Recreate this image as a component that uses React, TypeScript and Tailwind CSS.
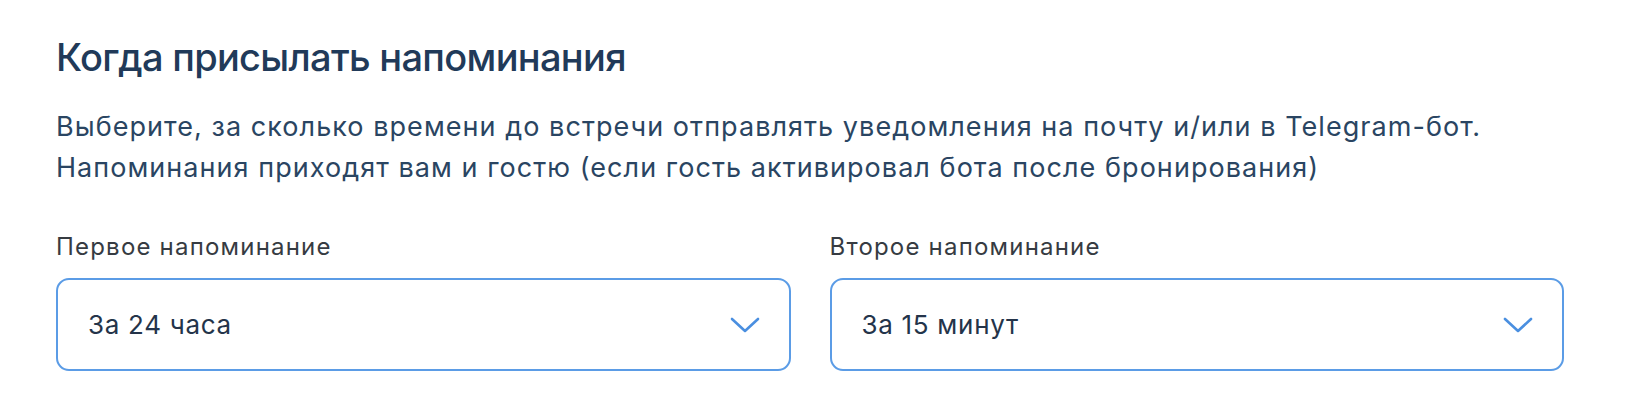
import React, { useState } from 'react';

type Option = { value: string; label: string };

const OPTIONS: Option[] = [
  { value: '15m', label: 'За 15 минут' },
  { value: '1h', label: 'За 1 час' },
  { value: '3h', label: 'За 3 часа' },
  { value: '24h', label: 'За 24 часа' },
];

const ReminderSelect: React.FC<{ label: string; value: string; onChange: (v: string) => void }> = ({
  label,
  value,
  onChange,
}) => {
  const current = OPTIONS.find(o => o.value === value);
  return (
    <div className="flex flex-col">
      <div className="text-[24px] leading-[30px] text-[#363b42] tracking-[1.2px]">{label}</div>
      <div className="relative mt-[16px]">
        <select
          value={value}
          onChange={e => onChange(e.target.value)}
          className="absolute inset-0 opacity-0 cursor-pointer"
        >
          {OPTIONS.map(o => (
            <option key={o.value} value={o.value}>
              {o.label}
            </option>
          ))}
        </select>
        <div className="flex h-[93px] items-center justify-between rounded-[13px] border-2 border-[#5b9ce6] pl-[30px] pr-[29px]">
          <span className="text-[26px] text-[#24344a] tracking-[0.7px]">{current?.label}</span>
          <svg width="30" height="16" viewBox="0 0 30 16" fill="none" className="text-[#4a8fe0]">
            <path d="M2 2 L15 14 L28 2" stroke="currentColor" strokeWidth="2.6" strokeLinecap="round" strokeLinejoin="round" />
          </svg>
        </div>
      </div>
    </div>
  );
};

export default function App() {
  const [first, setFirst] = useState('24h');
  const [second, setSecond] = useState('15m');

  return (
    <div className="min-h-[417px] bg-white pl-[56px] pt-[34px] font-['Inter',sans-serif]">
      <div className="w-[1508px]">
        <h2 className="text-[38px] leading-[46px] font-medium text-[#213a59] tracking-[-0.7px]">
          Когда присылать напоминания
        </h2>
        <p className="mt-[26px] text-[27px] leading-[41px] text-[#2a4562] tracking-[1.05px]">
          Выберите, за сколько времени до встречи отправлять уведомления на почту и/или в Telegram-бот.
          <br />
          Напоминания приходят вам и гостю (если гость активировал бота после бронирования)
        </p>
        <div className="mt-[44px] grid grid-cols-2 gap-[39px]">
          <ReminderSelect label="Первое напоминание" value={first} onChange={setFirst} />
          <ReminderSelect label="Второе напоминание" value={second} onChange={setSecond} />
        </div>
      </div>
    </div>
  );
}
